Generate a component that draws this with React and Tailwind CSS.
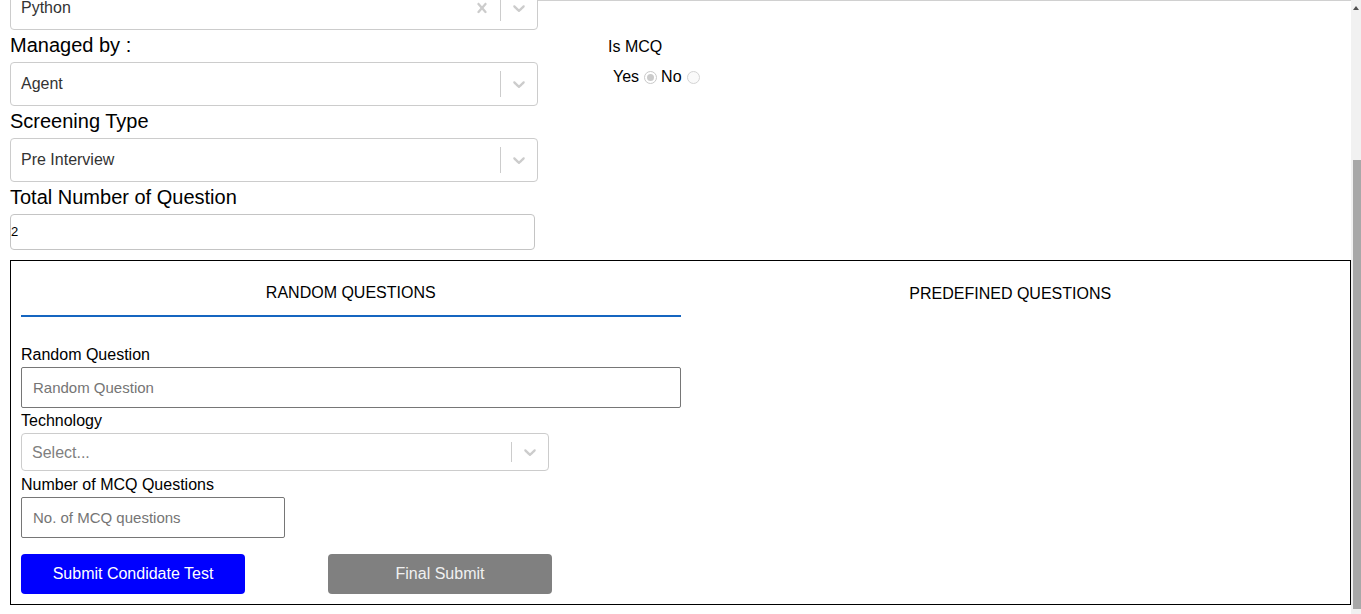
import React from "react";

const Chevron = () => (
  <svg width="20" height="20" viewBox="0 0 20 20" fill="#cccccc" aria-hidden="true">
    <path d="M4.516 7.548c0.436-0.446 1.043-0.481 1.576 0l3.908 3.747 3.908-3.747c0.533-0.481 1.141-0.446 1.574 0 0.436 0.445 0.408 1.197 0 1.615-0.406 0.418-4.695 4.502-4.695 4.502-0.217 0.223-0.502 0.335-0.787 0.335s-0.57-0.112-0.789-0.335c0 0-4.287-4.084-4.695-4.502s-0.436-1.17 0-1.615z" />
  </svg>
);

const Cross = () => (
  <svg width="20" height="20" viewBox="0 0 20 20" fill="#cccccc" aria-hidden="true">
    <path d="M14.348 14.849c-0.469 0.469-1.229 0.469-1.697 0l-2.651-3.030-2.651 3.029c-0.469 0.469-1.229 0.469-1.697 0-0.469-0.469-0.469-1.229 0-1.697l2.758-3.150-2.759-3.152c-0.469-0.469-0.469-1.228 0-1.697s1.228-0.469 1.697 0l2.652 3.031 2.651-3.031c0.469-0.469 1.228-0.469 1.697 0s0.469 1.229 0 1.697l-2.758 3.152 2.758 3.150c0.469 0.469 0.469 1.229 0 1.698z" />
  </svg>
);

function Select({ value, placeholder, clearable, tall }) {
  return (
    <div
      className={`flex items-center border border-[#cccccc] rounded-[4px] bg-white ${
        tall ? "h-[44px]" : "h-[38px]"
      }`}
    >
      <div className={`flex-1 px-[10px] text-[16px] ${tall ? "" : "pt-[1px]"}`}>
        {value ? (
          <span className="text-[#333333]">{value}</span>
        ) : (
          <span className="text-[#808080]">{placeholder}</span>
        )}
      </div>
      {clearable && (
        <div className="w-[36px] h-full flex items-center justify-center">
          <Cross />
        </div>
      )}
      <div className="w-px self-stretch my-[8px] bg-[#cccccc]" />
      <div className="w-[36px] h-full flex items-center justify-center">
        <Chevron />
      </div>
    </div>
  );
}

function Label({ children }) {
  return (
    <div className="h-[32px] flex items-center pb-[3px] text-[20px] leading-none text-black">
      {children}
    </div>
  );
}

function SmallLabel({ children }) {
  return <div className="h-[20px] pt-[1px] leading-[20px] text-[16px] text-black">{children}</div>;
}

export default function App() {
  return (
    <div className="flex h-[614px] w-[1361px] overflow-hidden bg-white font-['Liberation_Sans',Arial,sans-serif]">
      <div className="flex-1 overflow-hidden">
        <div className="-mt-[14px]">
          <div className="flex">
            <div className="w-[538px] pl-[10px]">
              <Select value="Python" clearable tall />
              <Label>Managed by :</Label>
              <Select value="Agent" tall />
              <Label>Screening Type</Label>
              <Select value="Pre Interview" tall />
              <Label>Total Number of Question</Label>
              <div className="w-[525px] h-[36px] border border-[#c4c4c4] rounded-[4px] flex items-center text-[13px] text-black">
                <span>2</span>
              </div>
            </div>
            <div className="flex-1">
              <div className="h-[15px] border-b border-[#d0d0d0]" />
              <div className="pl-[70px] mt-[36px] text-[16px] leading-[20px] text-black">Is MCQ</div>
              <div className="pl-[75px] mt-[10px] flex items-center text-[16px] leading-[20px] text-black">
                <span>Yes</span>
                <span className="ml-[5px] mr-[4px] w-[13px] h-[13px] rounded-full border border-[#c9c9c9] bg-white flex items-center justify-center">
                  <span className="w-[7px] h-[7px] rounded-full bg-[#cbcbcb]" />
                </span>
                <span>No</span>
                <span className="ml-[5px] w-[13px] h-[13px] rounded-full border border-[#d4d4d4] bg-[#fafafa]" />
              </div>
            </div>
          </div>

          <div className="ml-[10px] mt-[10px] border border-black px-[10px] pt-[8px] pb-[10px]">
            <div className="flex">
              <div className="flex-1 h-[48px] flex items-center justify-center border-b-2 border-[#1565c0] pt-[1px] text-[16px] text-black">
                RANDOM QUESTIONS
              </div>
              <div className="flex-1 h-[48px] flex items-center justify-center pt-[1px] text-[16px] text-black">
                PREDEFINED QUESTIONS
              </div>
            </div>

            <div className="pt-[27px]">
              <SmallLabel>Random Question</SmallLabel>
              <div className="mt-[3px] w-[660px] h-[41px] border border-[#767676] rounded-[2px] flex items-center pl-[11px] pt-[1px] text-[15px] text-[#757575]">
                Random Question
              </div>
              <div className="mt-[2px]">
                <SmallLabel>Technology</SmallLabel>
              </div>
              <div className="mt-[3px] w-[528px]">
                <Select placeholder="Select..." />
              </div>
              <div className="mt-[3px]">
                <SmallLabel>Number of MCQ Questions</SmallLabel>
              </div>
              <div className="mt-[3px] w-[264px] h-[41px] border border-[#767676] rounded-[2px] flex items-center pl-[11px] pt-[1px] text-[15px] text-[#757575]">
                No. of MCQ questions
              </div>
              <div className="mt-[16px] flex gap-[83px]">
                <button className="w-[224px] h-[40px] rounded-[4px] bg-[#0000ff] text-white text-[16px]">
                  Submit Condidate Test
                </button>
                <button className="w-[224px] h-[40px] rounded-[4px] bg-[#808080] text-[#f0f0f0] text-[16px]">
                  Final Submit
                </button>
              </div>
            </div>
          </div>
        </div>
      </div>

      <div className="w-[10px] h-full bg-[#f1f1f1] flex flex-col items-center">
        <div className="h-[160px] w-full flex justify-center pt-[6px]">
          <div className="w-0 h-0 border-l-[3px] border-r-[3px] border-b-[4px] border-l-transparent border-r-transparent border-b-[#505050]" />
        </div>
        <div className="w-[8px] ml-[2px] h-[449px] bg-[#a8a8a8]" />
      </div>
    </div>
  );
}
